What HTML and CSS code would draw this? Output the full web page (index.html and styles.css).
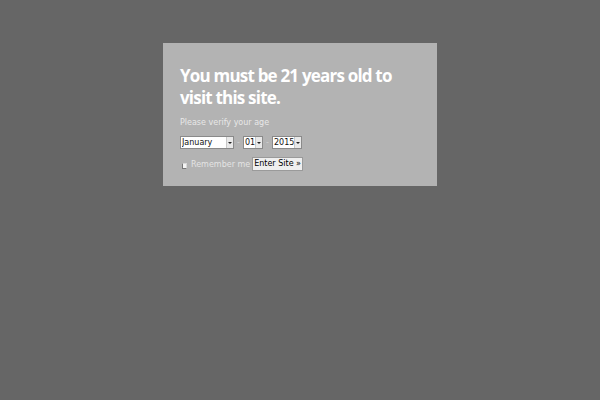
FILE: index.html
```html
<!DOCTYPE html>
<html>
<head>
<meta charset="utf-8">
<link rel="stylesheet" href="styles.css">
</head>
<body>
<div class="overlay">
  <div class="box">
    <h1 class="title">You must be 21 years old to visit this site.</h1>
    <p class="sub">Please verify your age</p>
    <form class="form">
      <div class="dates">
        <span class="selwrap month"><select class="sel"><option>January</option></select></span>
        <span class="dash">-</span>
        <span class="selwrap day"><select class="sel"><option>01</option></select></span>
        <span class="dash">-</span>
        <span class="selwrap year"><select class="sel"><option>2015</option></select></span>
      </div>
      <div class="row">
        <input type="checkbox" class="chk">
        <label class="remember">Remember me</label>
        <button type="button" class="btn">Enter Site »</button>
      </div>
    </form>
  </div>
</div>
</body>
</html>
```
FILE: styles.css
```css
html, body {
  margin: 0;
  padding: 0;
  background: #666666;
  width: 600px;
  height: 400px;
  overflow: hidden;
}
.overlay {
  display: flex;
  justify-content: center;
  padding-top: 43px;
}
.box {
  width: 274px;
  height: 143px;
  box-sizing: border-box;
  padding: 22px 17px 0 17px;
  background: #b3b3b3;
  font-family: "DejaVu Sans", sans-serif;
}
.title {
  margin: 0;
  font-family: "Open Sans", sans-serif;
  font-weight: 700;
  font-size: 17px;
  letter-spacing: -0.8px;
  line-height: 22px;
  color: #ffffff;
}
.sub {
  margin: 8px 0 0 0;
  font-size: 8px;
  line-height: 11px;
  color: #e8e8e8;
}
.form {
  margin: 0;
}
.dates {
  display: flex;
  align-items: center;
  margin-top: 8px;
  height: 13px;
}
.selwrap {
  position: relative;
  display: block;
  height: 13px;
  box-sizing: border-box;
  border: 1px solid #8a8a8a;
  background: #ffffff;
}
.selwrap::after {
  content: "";
  position: absolute;
  top: 0;
  right: 0;
  width: 6px;
  height: 11px;
  background: #e8e8e8;
  border-left: 1px solid #c8c8c8;
}
.selwrap::before {
  content: "";
  position: absolute;
  z-index: 1;
  top: 5px;
  right: 1px;
  border-left: 2px solid transparent;
  border-right: 2px solid transparent;
  border-top: 2px solid #222;
}
.sel {
  appearance: none;
  -webkit-appearance: none;
  display: block;
  width: 100%;
  height: 11px;
  border: 0;
  background: transparent;
  font-family: "DejaVu Sans", sans-serif;
  font-size: 8px;
  line-height: 11px;
  color: #111;
  padding: 0 0 0 1px;
  margin: 0;
}
.month { width: 54px; }
.day { width: 20px; }
.year { width: 30px; }
.dash {
  font-size: 8px;
  color: #d0d0d0;
  width: 9px;
  text-align: center;
}
.row {
  display: flex;
  align-items: center;
  margin-top: 8px;
}
.chk {
  appearance: none;
  -webkit-appearance: none;
  width: 5px;
  height: 6px;
  margin: 3px 4px 0 2px;
  border: 1px solid #d8d8d8;
  border-left-color: #777;
  border-bottom-color: #777;
  background: #f4f4f4;
  box-sizing: border-box;
}
.remember {
  font-size: 8px;
  color: #e4e4e4;
  margin-right: 2px;
}
.btn {
  font-family: "DejaVu Sans", sans-serif;
  font-size: 8px;
  color: #000;
  background: #efefef;
  border: 1px solid #9a9a9a;
  border-radius: 0;
  padding: 0 1px;
  margin: 0;
  height: 14px;
  line-height: 12px;
  white-space: nowrap;
}
```
